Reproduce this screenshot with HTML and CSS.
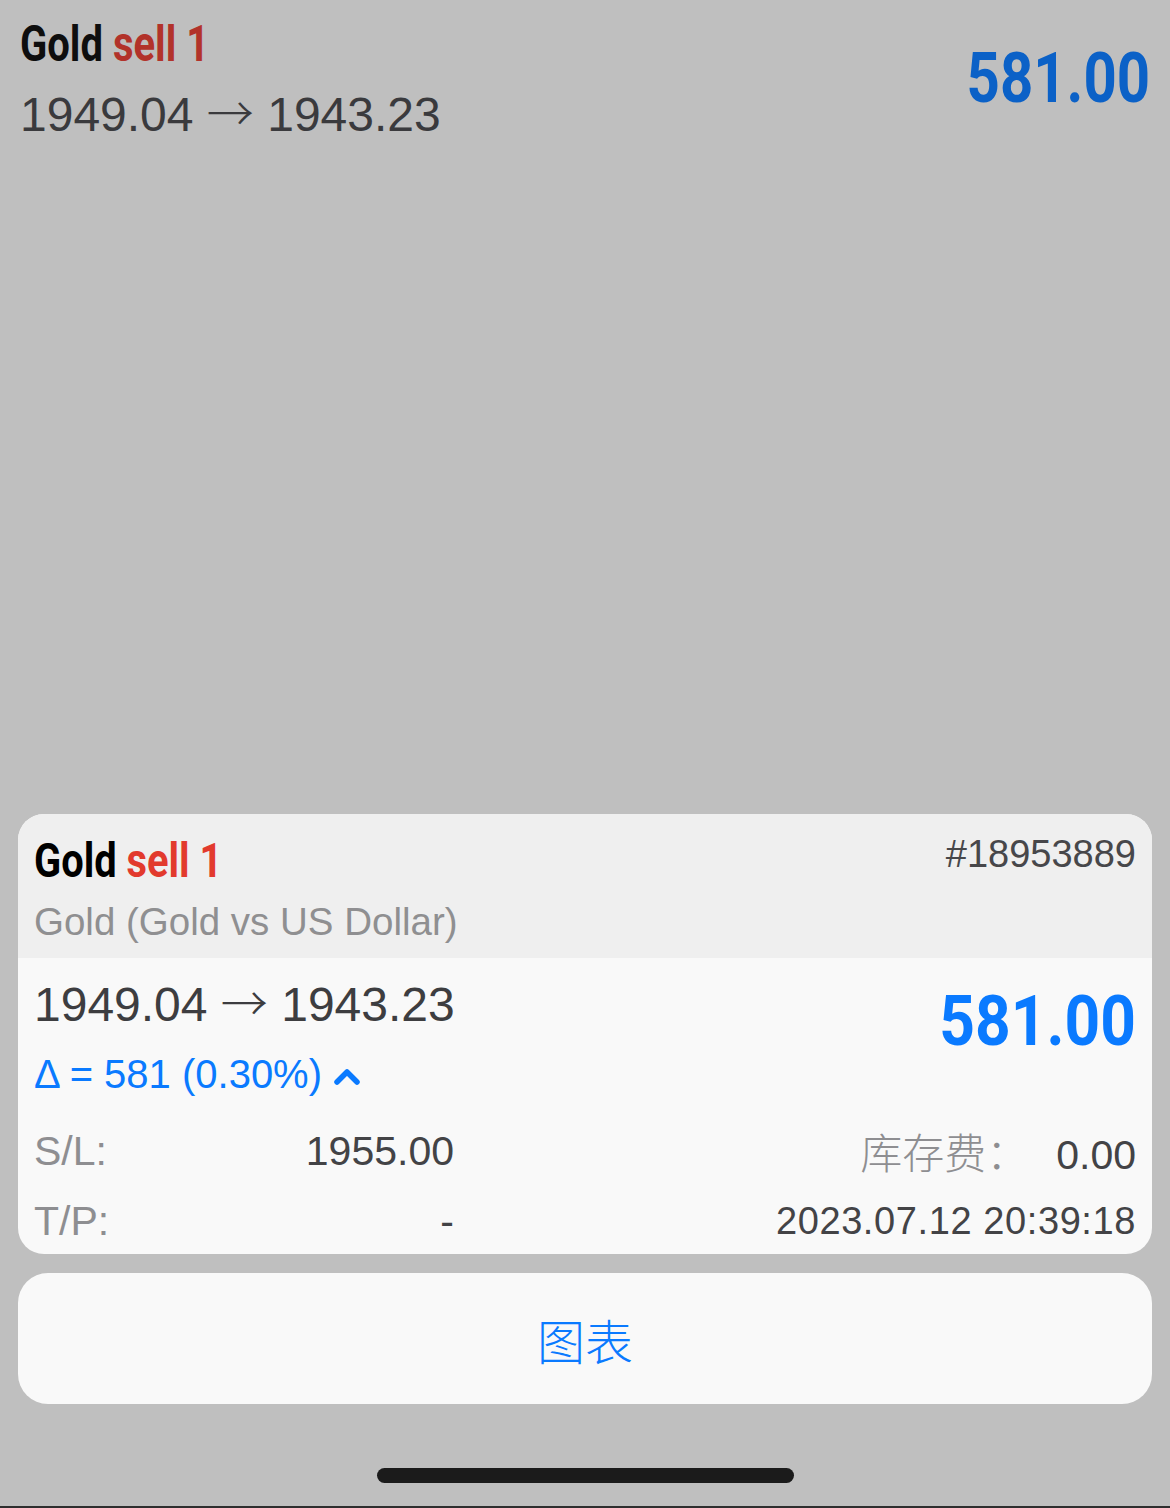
FILE: index.html
```html
<!DOCTYPE html>
<html lang="zh">
<head>
<meta charset="utf-8">
<title>Gold sell 1</title>
<link rel="stylesheet" href="styles.css">
</head>
<body>
<div class="screen">
  <div class="list-row">
    <div class="list-left">
      <div class="title dim"><span class="sym">Gold</span> <span class="side">sell 1</span></div>
      <div class="price-line dim-text">1949.04 <span class="arrow">→</span> 1943.23</div>
    </div>
    <div class="profit dim-blue">581.00</div>
  </div>

  <div class="sheet">
    <div class="card">
      <div class="card-head">
        <div class="head-left">
          <div class="title card-title"><span class="sym">Gold</span> <span class="side">sell 1</span></div>
          <div class="subtitle">Gold (Gold vs US Dollar)</div>
        </div>
        <div class="ticket">#18953889</div>
      </div>
      <div class="card-body">
        <div class="body-top">
          <div class="body-left">
            <div class="price-line">1949.04 <span class="arrow">→</span> 1943.23</div>
            <div class="delta">Δ = 581 (0.30%)<svg class="chev" viewBox="0 0 26 18" width="26" height="18"><polyline points="3,15 13,5 23,15" fill="none" stroke="#0a7aff" stroke-width="5.5" stroke-linecap="round" stroke-linejoin="round"/></svg></div>
          </div>
          <div class="profit card-profit">581.00</div>
        </div>
        <div class="info">
          <div class="pair"><span class="label">S/L:</span><span class="value">1955.00</span></div>
          <div class="right"><span class="label cjk">库存费：</span><span class="value">0.00</span></div>
          <div class="pair"><span class="label">T/P:</span><span class="value">-</span></div>
          <div class="right"><span class="value date">2023.07.12 20:39:18</span></div>
        </div>
      </div>
    </div>
    <div class="button">图表</div>
  </div>
  <div class="home"></div>
</div>
</body>
</html>
```

FILE: styles.css
```css
html, body {
  margin: 0;
  padding: 0;
}
body {
  background: #bfbfbf;
  font-family: "Liberation Sans", "Noto Sans CJK SC", Arial, sans-serif;
}
.screen {
  height: 1508px;
  box-sizing: border-box;
  border-bottom: 2px solid #2e2e2e;
  display: flex;
  flex-direction: column;
}

/* dimmed list row behind the sheet */
.list-row {
  display: flex;
  justify-content: space-between;
  align-items: flex-start;
  padding: 16px 20px 0 20px;
}
.title {
  font-family: Roboto, "Liberation Sans", sans-serif;
  font-weight: 700;
  font-size: 50px;
  line-height: 56px;
  white-space: nowrap;
  display: inline-block;
  transform: scaleX(0.8);
  transform-origin: left center;
}
.dim .sym { color: #0e0e0e; }
.dim .side { color: #b2322a; }
.price-line {
  font-size: 48px;
  line-height: 54px;
  color: #3d3d40;
  white-space: nowrap;
}
.arrow {
  font-family: "Noto Sans CJK SC", sans-serif;
  font-weight: 300;
  font-size: 47px;
  line-height: 1;
}
.list-left .price-line {
  margin-top: 15px;
  color: #3a3a3d;
}
.profit {
  font-family: Roboto, "Liberation Sans", sans-serif;
  font-weight: 700;
  font-size: 70px;
  line-height: 70px;
  white-space: nowrap;
  transform: scaleX(0.83);
  transform-origin: right center;
}
.dim-blue {
  color: #0b61c7;
  margin-top: 27px;
}

/* sheet */
.sheet {
  margin-top: auto;
  padding: 0 18px;
  display: flex;
  flex-direction: column;
  gap: 19px;
}
.card {
  border-radius: 26px;
  overflow: hidden;
  background: #f9f9f9;
}
.card-head {
  height: 144px;
  box-sizing: border-box;
  background: #efefef;
  padding: 19px 16px 0 16px;
  display: flex;
  justify-content: space-between;
  align-items: flex-start;
}
.card-title {
  font-size: 48px;
  transform: scaleX(0.83);
}
.card-title .sym { color: #000; }
.card-title .side { color: #e23a2d; }
.subtitle {
  font-size: 38.5px;
  line-height: 42px;
  color: #8f8f91;
  margin-top: 12px;
  white-space: nowrap;
}
.ticket {
  font-size: 38px;
  line-height: 42px;
  color: #47474a;
}
.card-body {
  height: 296px;
  box-sizing: border-box;
  padding: 19px 16px 0 16px;
}
.body-top {
  display: flex;
  justify-content: space-between;
  align-items: flex-start;
}
.delta {
  margin-top: 21px;
  font-size: 40px;
  line-height: 42px;
  color: #0a7aff;
  display: flex;
  align-items: center;
  gap: 12px;
}
.chev {
  display: block;
  margin-top: 4px;
}
.card-profit {
  color: #0a7aff;
  margin-top: 9px;
  transform: scaleX(0.89);
}
.info {
  margin-top: 33px;
  display: grid;
  grid-template-columns: 420px 1fr;
  row-gap: 20px;
  line-height: 46px;
  font-size: 41px;
}
.pair {
  display: flex;
  justify-content: space-between;
  align-items: baseline;
}
.right {
  display: flex;
  justify-content: flex-end;
  align-items: baseline;
  gap: 28px;
}
.label {
  color: #8e8e91;
}
.label.cjk {
  font-family: "Noto Sans CJK SC", "Liberation Sans", sans-serif;
  font-weight: 300;
  font-size: 42px;
}
.value {
  color: #434346;
}
.date {
  font-size: 38px;
  letter-spacing: 0.6px;
}

.button {
  height: 131px;
  border-radius: 30px;
  background: #f9f9f9;
  display: flex;
  align-items: center;
  justify-content: center;
  font-family: "Noto Sans CJK SC", sans-serif;
  font-weight: 300;
  font-size: 48px;
  color: #0a7aff;
}
.home {
  width: 417px;
  height: 15px;
  border-radius: 8px;
  background: #1b1b1b;
  margin: 64px auto 23px auto;
}
```
